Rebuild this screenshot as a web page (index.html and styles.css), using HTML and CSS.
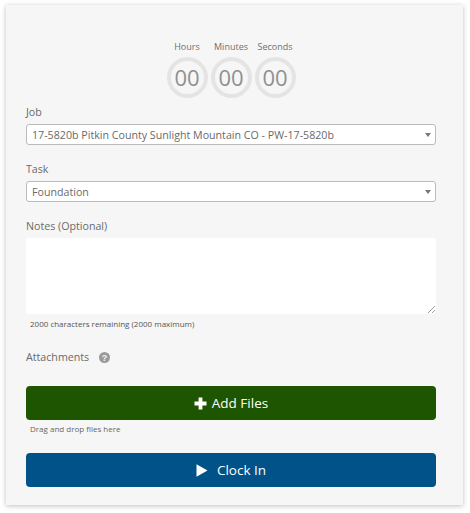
FILE: index.html
```html
<!DOCTYPE html>
<html lang="en">
<head>
<meta charset="UTF-8" />
<title>Clock In</title>
<link rel="stylesheet" href="styles.css">
</head>
<body>

<div class="card">
  <div class="timer">
    <div class="timer-unit">
      <span class="timer-label">Hours</span>
      <span class="timer-circle">00</span>
    </div>
    <div class="timer-unit">
      <span class="timer-label">Minutes</span>
      <span class="timer-circle">00</span>
    </div>
    <div class="timer-unit">
      <span class="timer-label">Seconds</span>
      <span class="timer-circle">00</span>
    </div>
  </div>

  <div class="field job-field">
    <div class="field-label">Job</div>
    <div class="select">
      <span>17-5820b Pitkin County Sunlight Mountain CO - PW-17-5820b</span>
      <i class="caret"></i>
    </div>
  </div>

  <div class="field task-field">
    <div class="field-label">Task</div>
    <div class="select">
      <span>Foundation</span>
      <i class="caret"></i>
    </div>
  </div>

  <div class="field notes-field">
    <div class="field-label">Notes (Optional)</div>
    <div class="notes-box">
      <svg class="resize-grip" width="8" height="8" viewBox="0 0 8 8">
        <path d="M1 8 L8 1 M5 8 L8 5" stroke="#888" stroke-width="0.8" fill="none" />
      </svg>
    </div>
    <div class="hint notes-hint">2000 characters remaining (2000 maximum)</div>
  </div>

  <div class="attachments">
    <span class="field-label">Attachments</span>
    <svg class="help-icon" width="11" height="11" viewBox="0 0 11 11">
      <circle cx="5.5" cy="5.5" r="5.5" fill="#9a9a9a" />
      <text x="5.5" y="8.6" text-anchor="middle" class="help-mark">?</text>
    </svg>
  </div>

  <div class="btn btn-add">
    <svg width="13" height="13" viewBox="0 0 13 13">
      <path d="M4.6 0.5 H8.4 V4.6 H12.5 V8.4 H8.4 V12.5 H4.6 V8.4 H0.5 V4.6 H4.6 Z" fill="#fff" />
    </svg>
    <span>Add Files</span>
  </div>
  <div class="hint drop-hint">Drag and drop files here</div>

  <div class="btn btn-clock">
    <svg class="play-icon" width="12" height="13" viewBox="0 0 12 13">
      <path d="M0.5 0.3 L11.5 6.5 L0.5 12.7 Z" fill="#fff" />
    </svg>
    <span>Clock In</span>
  </div>
</div>

</body>
</html>
```

FILE: styles.css
```css
body {
  margin: 0;
  padding: 5px 7px 8px 6px;
  background: #fff;
  font-family: "Open Sans", "Noto Sans", sans-serif;
  color: #555;
}

.card {
  box-sizing: border-box;
  width: 457px;
  height: 500px;
  padding: 36px 27px 0 20px;
  background: #f6f6f6;
  box-shadow: 0 1px 5px rgba(0, 0, 0, 0.25);
}

/* timer */
.timer {
  display: flex;
  justify-content: center;
  gap: 3px;
}

.timer-unit {
  width: 41px;
  display: flex;
  flex-direction: column;
  align-items: center;
}

.timer-label {
  font-size: 9px;
  line-height: 12px;
  white-space: nowrap;
  color: #707070;
  margin-bottom: 4px;
}

.timer-circle {
  box-sizing: border-box;
  width: 41px;
  height: 41px;
  border: 4px solid #e4e4e4;
  border-radius: 50%;
  font-size: 22px;
  line-height: 33px;
  text-align: center;
  color: #909090;
}

/* form */
.field-label {
  font-size: 10.66px;
  line-height: 16px;
  color: #6a6a6a;
}

.field .field-label {
  margin-bottom: 4px;
}

.job-field {
  margin-top: 6px;
}

.task-field {
  margin-top: 16px;
}

.notes-field {
  margin-top: 16px;
}

.select {
  box-sizing: border-box;
  height: 21px;
  padding: 0 4px 0 5px;
  display: flex;
  align-items: center;
  justify-content: space-between;
  background: #fff;
  border: 1px solid #bbb;
  border-radius: 3px;
  font-size: 10.66px;
  color: #6a6a6a;
}

.caret {
  width: 0;
  height: 0;
  border-left: 3px solid transparent;
  border-right: 3px solid transparent;
  border-top: 4px solid #777;
}

.notes-box {
  position: relative;
  height: 76px;
  background: #fff;
  border-radius: 3px;
}

.resize-grip {
  position: absolute;
  right: 1px;
  bottom: 1px;
}

.hint {
  font-size: 8px;
  line-height: 11px;
  padding-left: 4px;
  color: #555;
}

.notes-hint {
  margin-top: 4px;
}

.attachments {
  display: flex;
  align-items: center;
  gap: 10px;
  margin-top: 20px;
}

.help-mark {
  font-family: "Liberation Sans", sans-serif;
  font-size: 9px;
  font-weight: 700;
  fill: #f6f6f6;
}

/* buttons */
.btn {
  height: 34px;
  display: flex;
  align-items: center;
  justify-content: center;
  gap: 5px;
  border-radius: 4px;
  color: #fff;
  font-size: 13.5px;
}

.btn-add {
  margin-top: 21px;
  background: #1e5500;
}

.drop-hint {
  margin-top: 3px;
  color: #666;
}

.btn-clock {
  margin-top: 19px;
  background: #005288;
}

.play-icon {
  margin-right: 4px;
}
```
